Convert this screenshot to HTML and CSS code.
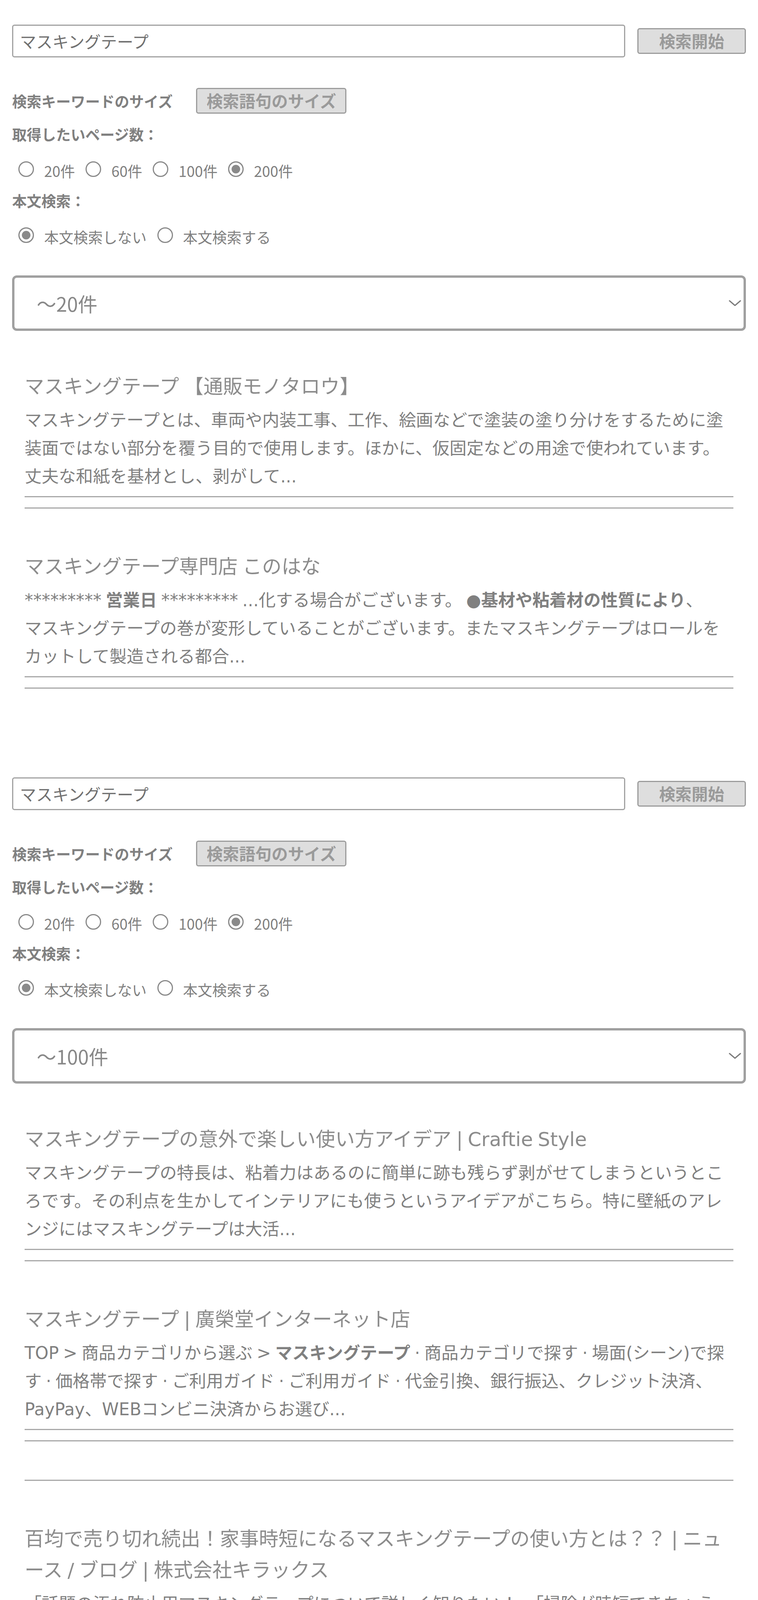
FILE: index.html
```html
<!DOCTYPE html>
<html lang="ja">
<head>
<meta charset="utf-8">
<title>マスキングテープ 検索</title>
<link rel="stylesheet" href="styles.css">
</head>
<body>

<section class="search">
  <div class="search-row">
    <input class="query" type="text" value="マスキングテープ">
    <button class="btn btn-search" type="button">検索開始</button>
  </div>
  <div class="size-row">
    <span class="field-label size-label">検索キーワードのサイズ</span>
    <button class="btn btn-size" type="button">検索語句のサイズ</button>
  </div>
  <div class="field-label">取得したいページ数：</div>
  <div class="options options-pages">
    <label class="opt"><input type="radio" name="p1"><span>20件</span></label>
    <label class="opt"><input type="radio" name="p1"><span>60件</span></label>
    <label class="opt"><input type="radio" name="p1"><span>100件</span></label>
    <label class="opt"><input type="radio" name="p1" checked><span>200件</span></label>
  </div>
  <div class="field-label field-label-body">本文検索：</div>
  <div class="options options-body">
    <label class="opt"><input type="radio" name="b1" checked><span>本文検索しない</span></label>
    <label class="opt"><input type="radio" name="b1"><span>本文検索する</span></label>
  </div>
  <div class="select-wrap">
    <select class="count"><option>～20件</option></select>
    <svg class="chevron" viewBox="0 0 32 16" width="32" height="16" aria-hidden="true"><path d="M2 2 L16 14 L30 2" fill="none" stroke="#7a7a7a" stroke-width="3" stroke-linecap="round" stroke-linejoin="round"/></svg>
  </div>

  <div class="results">
    <div class="result">
      <div class="result-body">
        <h3 class="result-title">マスキングテープ 【通販モノタロウ】</h3>
        <p class="result-desc">マスキングテープとは、車両や内装工事、工作、絵画などで塗装の塗り分けをするために塗装面ではない部分を覆う目的で使用します。ほかに、仮固定などの用途で使われています。丈夫な和紙を基材とし、剥がして...</p>
      </div>
      <hr class="result-rule">
    </div>
    <div class="result">
      <div class="result-body">
        <h3 class="result-title">マスキングテープ専門店 このはな</h3>
        <p class="result-desc">********* <b>営業日</b> ********* ...化する場合がございます。 ●<b>基材や粘着材の性質により</b>、<br>マスキングテープの巻が変形していることがございます。またマスキングテープはロールをカットして製造される都合...</p>
      </div>
      <hr class="result-rule">
    </div>
  </div>
</section>

<section class="search">
  <div class="search-row">
    <input class="query" type="text" value="マスキングテープ">
    <button class="btn btn-search" type="button">検索開始</button>
  </div>
  <div class="size-row">
    <span class="field-label size-label">検索キーワードのサイズ</span>
    <button class="btn btn-size" type="button">検索語句のサイズ</button>
  </div>
  <div class="field-label">取得したいページ数：</div>
  <div class="options options-pages">
    <label class="opt"><input type="radio" name="p2"><span>20件</span></label>
    <label class="opt"><input type="radio" name="p2"><span>60件</span></label>
    <label class="opt"><input type="radio" name="p2"><span>100件</span></label>
    <label class="opt"><input type="radio" name="p2" checked><span>200件</span></label>
  </div>
  <div class="field-label field-label-body">本文検索：</div>
  <div class="options options-body">
    <label class="opt"><input type="radio" name="b2" checked><span>本文検索しない</span></label>
    <label class="opt"><input type="radio" name="b2"><span>本文検索する</span></label>
  </div>
  <div class="select-wrap">
    <select class="count"><option>～100件</option></select>
    <svg class="chevron" viewBox="0 0 32 16" width="32" height="16" aria-hidden="true"><path d="M2 2 L16 14 L30 2" fill="none" stroke="#7a7a7a" stroke-width="3" stroke-linecap="round" stroke-linejoin="round"/></svg>
  </div>

  <div class="results">
    <div class="result">
      <div class="result-body">
        <h3 class="result-title">マスキングテープの意外で楽しい使い方アイデア | Craftie Style</h3>
        <p class="result-desc">マスキングテープの特長は、粘着力はあるのに簡単に跡も残らず剥がせてしまうというところです。その利点を生かしてインテリアにも使うというアイデアがこちら。特に壁紙のアレンジにはマスキングテープは大活...</p>
      </div>
      <hr class="result-rule">
    </div>
    <div class="result">
      <div class="result-body">
        <h3 class="result-title">マスキングテープ | 廣榮堂インターネット店</h3>
        <p class="result-desc">TOP &gt; 商品カテゴリから選ぶ &gt; <b>マスキングテープ</b> · 商品カテゴリで探す · 場面(シーン)で探<br>す · 価格帯で探す · ご利用ガイド · ご利用ガイド · 代金引換、銀行振込、クレジット決済、<br>PayPay、WEBコンビニ決済からお選び...</p>
      </div>
      <hr class="result-rule">
    </div>
    <div class="result result-empty">
      <hr class="result-rule">
    </div>
    <div class="result">
      <div class="result-body">
        <h3 class="result-title">百均で売り切れ続出！家事時短になるマスキングテープの使い方とは？？ | ニュース / ブログ | 株式会社キラックス</h3>
        <p class="result-desc">「話題の汚れ防止用マスキングテープについて詳しく知りたい！」「掃除が時短できちゃうって本当？？」「マスキングテープが買いたいけど、人気過ぎて全然百均に売っていない…」「他にはどこに売っているん...</p>
      </div>
      <hr class="result-rule">
    </div>
    <div class="result">
      <div class="result-body">
        <h3 class="result-title">マスキングテープの特徴と採用メリットについて | CiNii Research</h3>
        <p class="result-desc"><b>マスキングテープ</b> ノ トクチョウ ト サイヨウ メリット ニ ツイテ · Features of Masking<br>Tape and Advantage of Using it · <b>特集</b> 塗膜品質設計の管理ポイントと支援技術 · トクシュ<br>ウ トマク ヒンシツ セッケイ ノ カンリ ポイント ト ...</p>
      </div>
      <hr class="result-rule">
    </div>
  </div>
</section>

</body>
</html>
```

FILE: styles.css
```css
html, body {
  margin: 0;
  padding: 0;
  background: #ffffff;
}

body {
  font-family: "Noto Sans CJK JP", "Noto Sans", sans-serif;
  color: #7f7f7f;
  padding: 0 31px 30px 31px;
}

.search {
  padding-top: 63px;
}

.search + .search {
  margin-top: 164px;
}

/* search row */
.search-row {
  display: flex;
  align-items: center;
  gap: 31px;
}

.query {
  flex: 1;
  box-sizing: border-box;
  height: 84px;
  margin: 0;
  padding: 0 17px;
  border: 3px solid #a2a2a2;
  border-radius: 6px;
  font-family: "Noto Sans CJK JP", "Noto Sans", sans-serif;
  font-size: 41.67px;
  color: #707070;
  background: #fff;
  outline: none;
}

.btn {
  box-sizing: border-box;
  margin: 0;
  padding: 0;
  height: 66px;
  border: 3px solid #9c9c9c;
  border-radius: 6px;
  background: #dedede;
  color: #9a9a9a;
  font-family: "Noto Sans CJK JP", "Noto Sans", sans-serif;
  font-size: 41.67px;
  font-weight: bold;
  line-height: 1;
}

.btn-search {
  width: 278px;
  flex: none;
}

.btn-size {
  width: 385px;
}

/* size row */
.size-row {
  display: flex;
  align-items: center;
  margin-top: 78px;
  height: 66px;
}

.field-label {
  font-size: 37.5px;
  line-height: 44px;
  font-weight: bold;
  color: #808080;
  margin-top: 30px;
}

.size-label {
  margin-top: 0;
  margin-right: 60px;
}

.field-label-body {
  margin-top: 32px;
}

/* radios */
.options {
  display: flex;
  gap: 11px;
}

.options-pages {
  margin-top: 48px;
}

.options-body {
  margin-top: 47px;
}

.opt {
  display: flex;
  align-items: flex-end;
  font-size: 37.5px;
  line-height: 44px;
  color: #808080;
}

.opt input {
  appearance: none;
  -webkit-appearance: none;
  box-sizing: border-box;
  width: 40px;
  height: 40px;
  margin: 0 26px 6px 16px;
  border: 3px solid #8a8a8a;
  border-radius: 50%;
  background: #fff;
}

.opt input:checked {
  background: #8a8a8a;
  box-shadow: inset 0 0 0 6px #fff;
}

/* select */
.select-wrap {
  position: relative;
  margin-top: 77px;
}

.count {
  appearance: none;
  -webkit-appearance: none;
  display: block;
  box-sizing: border-box;
  width: 100%;
  height: 142px;
  margin: 0;
  padding: 0 0 0 57px;
  border: 6px solid #a0a0a0;
  border-radius: 12px;
  background: #fff;
  font-family: "Noto Sans CJK JP", "Noto Sans", sans-serif;
  font-size: 50px;
  color: #888888;
  outline: none;
}

.chevron {
  position: absolute;
  right: 12px;
  top: 63px;
}

/* results */
.results {
  padding: 0 32px;
}

.result {
  padding-top: 109px;
}

.result:first-child {
  padding-top: 103px;
}

.result-body {
  border-bottom: 3px solid #a8a8a8;
  padding-bottom: 14px;
}

.result-title {
  margin: 0;
  font-family: "DejaVu Sans", "Noto Sans CJK JP", sans-serif;
  font-size: 50px;
  line-height: 80px;
  font-weight: normal;
  word-spacing: -0.07em;
  color: #8c8c8c;
}

.result-desc {
  margin: 10px 0 0 0;
  font-family: "DejaVu Sans", "Noto Sans CJK JP", sans-serif;
  font-size: 43.75px;
  line-height: 72px;
  word-spacing: -0.07em;
  color: #808080;
}

.result-desc b {
  font-weight: bold;
}

.result-rule {
  margin: 26px 0 0 0;
  height: 0;
  border: 0;
  border-top: 3px solid #a8a8a8;
}

.result-empty {
  padding-top: 0;
}

.result-empty .result-rule {
  margin-top: 98px;
}
```
